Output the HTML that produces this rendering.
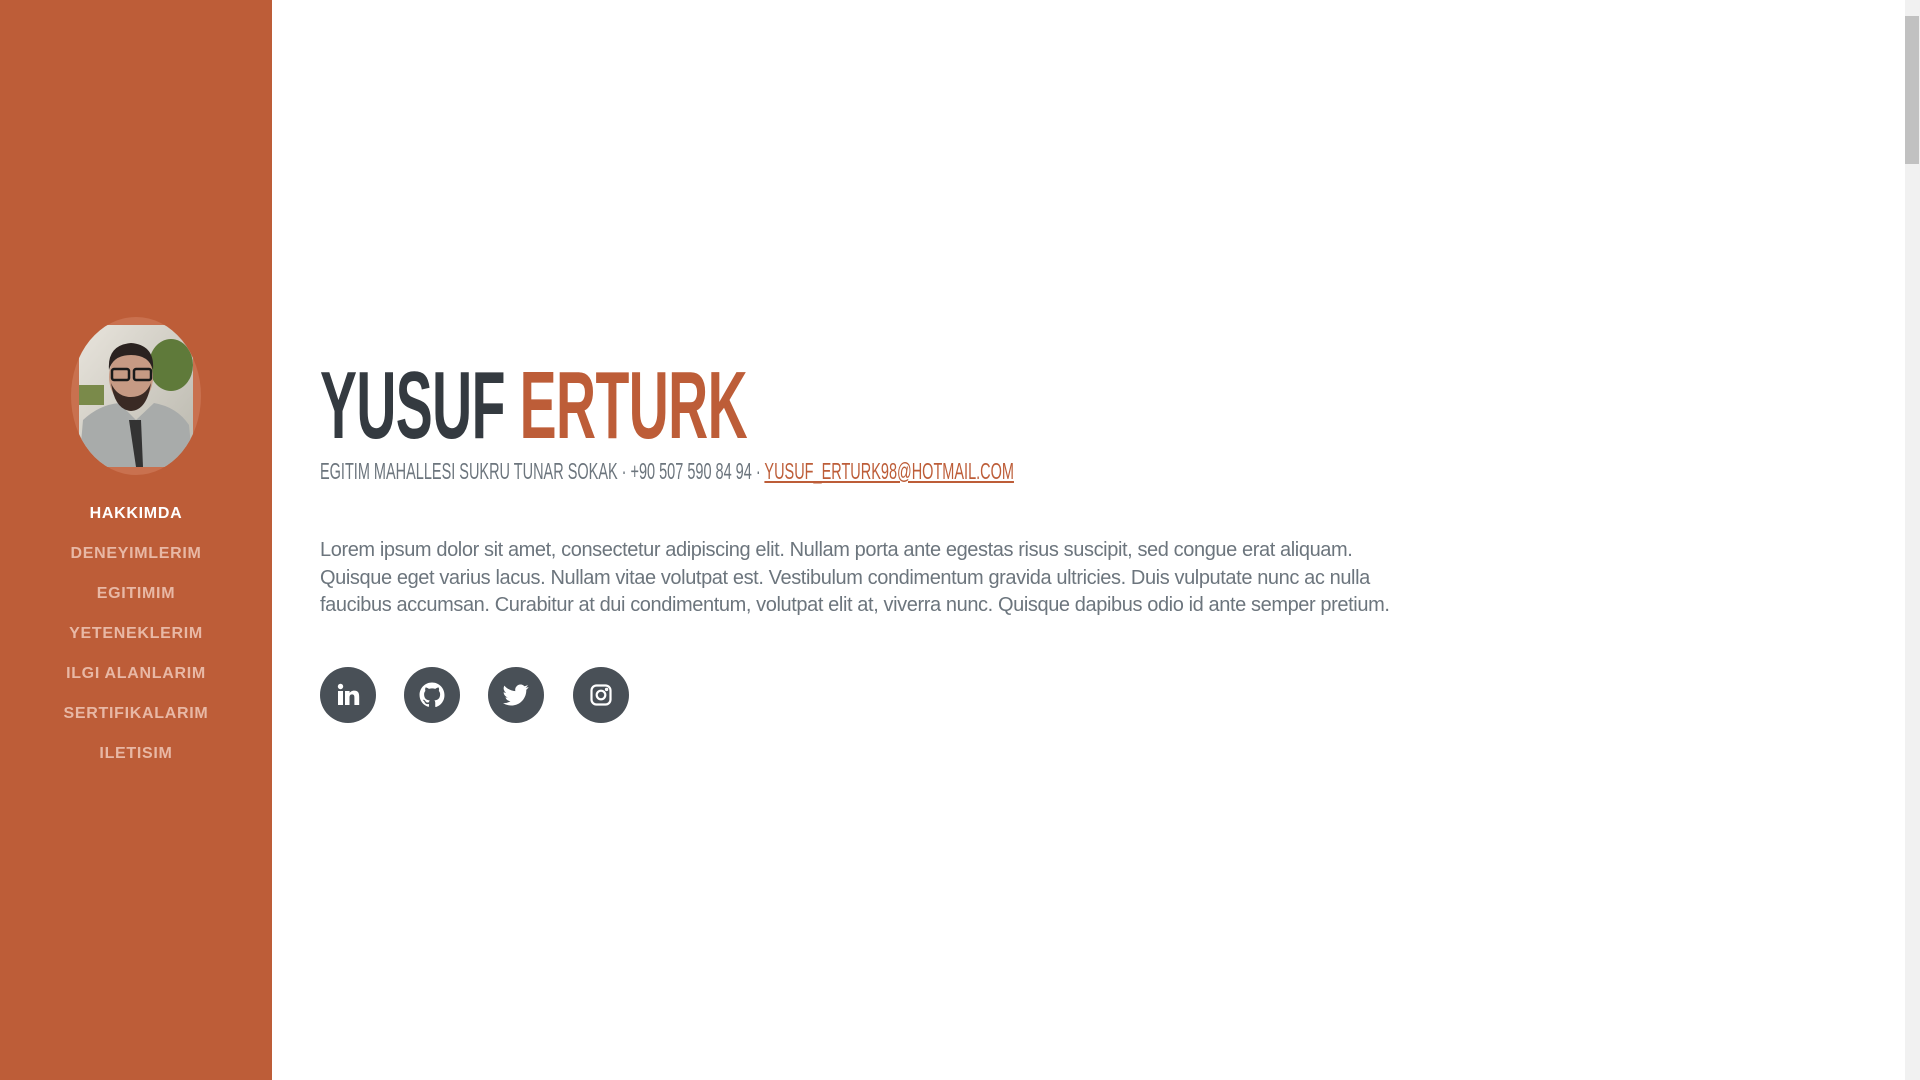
<!DOCTYPE html>
<html><head><meta charset="utf-8"><style>
*{margin:0;padding:0;box-sizing:border-box}
html,body{width:1920px;height:1080px;overflow:hidden;background:#fff;font-family:"Liberation Sans",sans-serif}
#side{position:absolute;left:0;top:0;width:272px;height:1080px;background:#bd5d38}
.av{position:absolute;left:71px;top:317px;width:130px;height:158px;border-radius:50%;background:#c9714f;overflow:hidden}
.av svg{position:absolute;left:8px;top:8px}
.nav{position:absolute;left:0;width:272px;text-align:center;font-weight:700;font-size:16px;letter-spacing:0.7px;color:#e8b8a5}
.nav.a{color:#fff}
.name{position:absolute;left:320px;top:358px;font-size:96px;font-weight:700;color:#343a40;white-space:nowrap;transform:scaleX(0.577);transform-origin:left top;line-height:1;letter-spacing:-1px}
.name span{color:#bd5d38}
.sub{position:absolute;left:320px;top:460px;font-size:23px;color:#6c757d;white-space:nowrap;transform:scaleX(0.63);transform-origin:left top;line-height:1}
.sub a{color:#bd5d38;text-decoration:underline}
.p{position:absolute;left:320px;top:537px;width:1100px;font-size:20px;line-height:27.5px;color:#6c757d;letter-spacing:-0.4px}
.ic{position:absolute;top:667px;width:56px;height:56px;border-radius:50%;background:#495057;display:flex;align-items:center;justify-content:center}
#sb{position:absolute;right:0;top:0;width:15px;height:1080px;background:#f1f1f1}
#th{position:absolute;right:1px;top:16px;width:14px;height:148px;background:#c1c1c1}
</style></head><body>
<div id="side">
<div class="av"><svg width="114" height="142" viewBox="0 0 114 142">
<defs><linearGradient id="bg" x1="0" y1="0" x2="1" y2="1"><stop offset="0" stop-color="#e8e4dc"/><stop offset="1" stop-color="#b9b7ad"/></linearGradient></defs>
<rect width="114" height="142" fill="url(#bg)"/>
<ellipse cx="92" cy="40" rx="22" ry="26" fill="#5f7a3a"/>
<rect x="0" y="60" width="25" height="20" fill="#7a8a4a"/>
<path d="M0 142 L4 95 Q20 80 40 78 L57 95 L75 78 Q98 82 110 100 L114 142Z" fill="#a8abaa"/>
<path d="M50 95 L57 142 L64 142 L62 95Z" fill="#333"/>
<ellipse cx="52" cy="52" rx="22" ry="28" fill="#c69a84"/>
<path d="M30 45 Q28 20 52 18 Q76 20 74 45 Q70 30 52 30 Q34 30 30 45Z" fill="#2a2220"/>
<path d="M32 58 Q36 85 52 86 Q68 85 72 58 Q66 72 52 72 Q38 72 32 58Z" fill="#3a2a24"/>
<rect x="33" y="44" width="17" height="11" rx="2" fill="none" stroke="#1a1a1a" stroke-width="2.5"/>
<rect x="55" y="44" width="17" height="11" rx="2" fill="none" stroke="#1a1a1a" stroke-width="2.5"/>
</svg></div>
<div class="nav a" style="top:505px">HAKKIMDA</div>
<div class="nav" style="top:545px">DENEYIMLERIM</div>
<div class="nav" style="top:585px">EGITIMIM</div>
<div class="nav" style="top:625px">YETENEKLERIM</div>
<div class="nav" style="top:665px">ILGI ALANLARIM</div>
<div class="nav" style="top:705px">SERTIFIKALARIM</div>
<div class="nav" style="top:745px">ILETISIM</div>
</div>
<div class="name">YUSUF <span>ERTURK</span></div>
<div class="sub">EGITIM MAHALLESI SUKRU TUNAR SOKAK · +90 507 590 84 94 · <a>YUSUF_ERTURK98@HOTMAIL.COM</a></div>
<div class="p">Lorem ipsum dolor sit amet, consectetur adipiscing elit. Nullam porta ante egestas risus suscipit, sed congue erat aliquam.<br>Quisque eget varius lacus. Nullam vitae volutpat est. Vestibulum condimentum gravida ultricies. Duis vulputate nunc ac nulla<br>faucibus accumsan. Curabitur at dui condimentum, volutpat elit at, viverra nunc. Quisque dapibus odio id ante semper pretium.</div>
<div class="ic" style="left:320px"><svg width="24" height="24" viewBox="0 0 24 24" fill="#fff"><rect x="2" y="8" width="5" height="14"/><circle cx="4.5" cy="3.5" r="2.7"/><path d="M9 8h4.6v2c.7-1.3 2.3-2.4 4.6-2.4 4.4 0 5 2.9 5 6.6V22h-4.8v-6.9c0-1.7 0-3.7-2.3-3.7s-2.6 1.8-2.6 3.6V22H9z"/></svg></div>
<div class="ic" style="left:404px"><svg width="26" height="26" viewBox="0 0 24 24" fill="#fff"><path d="M12 .5C5.6.5.5 5.6.5 12c0 5.1 3.3 9.4 7.9 10.9.6.1.8-.3.8-.6v-2c-3.2.7-3.9-1.5-3.9-1.5-.5-1.3-1.3-1.7-1.3-1.7-1-.7.1-.7.1-.7 1.2.1 1.8 1.2 1.8 1.2 1 1.8 2.7 1.3 3.4 1 .1-.8.4-1.3.7-1.6-2.6-.3-5.3-1.3-5.3-5.7 0-1.3.5-2.3 1.2-3.1-.1-.3-.5-1.5.1-3.1 0 0 1-.3 3.2 1.2a11 11 0 0 1 5.8 0c2.2-1.5 3.2-1.2 3.2-1.2.6 1.6.2 2.8.1 3.1.7.8 1.2 1.8 1.2 3.1 0 4.4-2.7 5.4-5.3 5.7.4.4.8 1.1.8 2.2v3.3c0 .3.2.7.8.6A11.5 11.5 0 0 0 23.5 12C23.5 5.6 18.4.5 12 .5z"/></svg></div>
<div class="ic" style="left:488px"><svg width="26" height="26" viewBox="0 0 24 24" fill="#fff"><path d="M23.6 4.6c-.9.4-1.8.6-2.8.8 1-.6 1.8-1.6 2.1-2.7-.9.6-2 1-3.1 1.2a4.9 4.9 0 0 0-8.4 4.5C7.3 8.2 3.7 6.3 1.3 3.3a4.9 4.9 0 0 0 1.5 6.6c-.8 0-1.6-.3-2.2-.6 0 2.4 1.7 4.4 3.9 4.8-.7.2-1.5.2-2.2.1.6 2 2.4 3.4 4.6 3.4A9.9 9.9 0 0 1 0 19.5 14 14 0 0 0 7.5 21.7c9.1 0 14-7.5 14-14v-.6c1-.7 1.8-1.6 2.1-2.5z"/></svg></div>
<div class="ic" style="left:573px"><svg width="24" height="24" viewBox="0 0 24 24" fill="none" stroke="#fff" stroke-width="2.2"><rect x="2.5" y="2.5" width="19" height="19" rx="5"/><circle cx="12" cy="12" r="4.3"/><circle cx="17.6" cy="6.4" r=".6" fill="#fff"/></svg></div>
<div id="sb"><div id="th"></div></div>
</body></html>
